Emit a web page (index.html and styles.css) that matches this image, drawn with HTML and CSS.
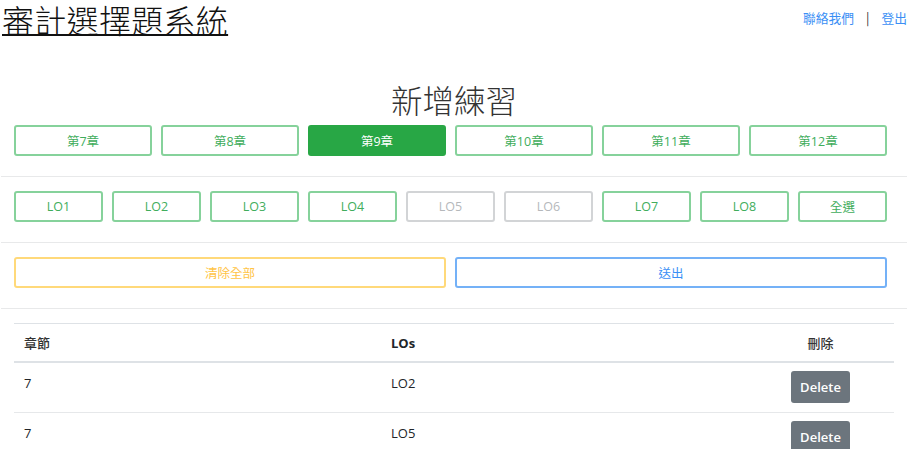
FILE: index.html
```html
<!DOCTYPE html>
<html lang="zh-Hant">
<head>
<meta charset="utf-8">
<title>審計選擇題系統</title>
<link rel="stylesheet" href="styles.css">
</head>
<body>
<div class="page">
  <header class="topbar">
    <h1 class="site-title">審計選擇題系統</h1>
    <nav class="toplinks">
      <a class="toplink" href="#">聯絡我們</a>
      <span class="sep">|</span>
      <a class="toplink" href="#">登出</a>
    </nav>
  </header>

  <h2 class="heading">新增練習</h2>

  <div class="btn-row chapters">
    <button class="btn btn-green">第7章</button>
    <button class="btn btn-green">第8章</button>
    <button class="btn btn-green active">第9章</button>
    <button class="btn btn-green">第10章</button>
    <button class="btn btn-green">第11章</button>
    <button class="btn btn-green">第12章</button>
  </div>

  <hr class="divider">

  <div class="btn-row los">
    <button class="btn btn-green">LO1</button>
    <button class="btn btn-green">LO2</button>
    <button class="btn btn-green">LO3</button>
    <button class="btn btn-green">LO4</button>
    <button class="btn btn-gray">LO5</button>
    <button class="btn btn-gray">LO6</button>
    <button class="btn btn-green">LO7</button>
    <button class="btn btn-green">LO8</button>
    <button class="btn btn-green">全選</button>
  </div>

  <hr class="divider">

  <div class="btn-row actions">
    <button class="btn btn-yellow">清除全部</button>
    <button class="btn btn-blue">送出</button>
  </div>

  <hr class="divider">

  <table class="list">
    <colgroup>
      <col class="c1"><col class="c2"><col class="c3"><col class="c4">
    </colgroup>
    <thead>
      <tr>
        <th class="cjk">章節</th>
        <th class="lat">LOs</th>
        <th class="cjk center">刪除</th>
        <th></th>
      </tr>
    </thead>
    <tbody>
      <tr>
        <td>7</td>
        <td>LO2</td>
        <td class="center del"><button class="btn-del">Delete</button></td>
        <td></td>
      </tr>
      <tr>
        <td>7</td>
        <td>LO5</td>
        <td class="center del"><button class="btn-del">Delete</button></td>
        <td></td>
      </tr>
    </tbody>
  </table>
</div>
</body>
</html>
```

FILE: styles.css
```css
html, body {
  margin: 0;
  padding: 0;
  background: #ffffff;
}

body {
  font-family: "Open Sans", "Noto Sans CJK TC", sans-serif;
  color: #212529;
  overflow: hidden;
}

.page {
  width: 906px;
  margin-left: 1px;
}

.topbar {
  display: flex;
  justify-content: space-between;
  align-items: flex-start;
}

.site-title {
  margin: 0 0 0 1px;
  font-family: "Noto Sans CJK TC", sans-serif;
  font-weight: 300;
  font-size: 32px;
  line-height: 38px;
  color: #111;
  text-decoration: underline;
  text-decoration-thickness: 2px;
  text-underline-offset: 1px;
  letter-spacing: 0.3px;
}

.toplinks {
  display: flex;
  align-items: center;
  margin-top: 10px;
  font-family: "Noto Sans CJK TC", sans-serif;
  font-size: 12.75px;
  line-height: 16px;
}

.toplink {
  color: #3b8ff5;
  text-decoration: none;
}

.sep {
  color: #333;
  margin: 0 12px 0 12px;
}

.heading {
  margin: 41px 0 6px;
  text-align: center;
  font-family: "Noto Sans CJK TC", sans-serif;
  font-weight: 300;
  font-size: 31.5px;
  line-height: 40px;
  color: #333;
}

.btn-row {
  display: flex;
  gap: 9px;
  padding: 0 20px 0 13px;
}

.btn {
  flex: 1 1 0;
  height: 31px;
  box-sizing: border-box;
  border-radius: 3px;
  background: #fff;
  font-family: "Open Sans", "Noto Sans CJK TC", sans-serif;
  font-size: 12.5px;
  padding: 0;
  cursor: pointer;
}

.btn-green {
  border: 2px solid #86d29b;
  color: #41ad5c;
}

.btn-green.active {
  background: #28a745;
  border-color: #28a745;
  color: #fff;
}

.btn-gray {
  border: 2px solid #d2d4d6;
  color: #b5b8bb;
}

.btn-yellow {
  border: 2px solid #ffd97a;
  color: #ffc446;
}

.btn-blue {
  border: 2px solid #74b1f7;
  color: #3a8ff5;
}

.divider {
  border: 0;
  border-top: 1px solid #e8e9ea;
  margin: 20px 0 14px;
  height: 0;
}

.list {
  margin-left: 13px;
  width: 880px;
  table-layout: fixed;
  border-collapse: collapse;
  font-size: 13px;
  color: #212529;
}

.c1 { width: 367px; }
.c2 { width: 400px; }
.c3 { width: 79px; }
.c4 { width: 34px; }

.list th,
.list td {
  padding: 10px 10px;
  text-align: left;
  vertical-align: top;
  line-height: 20px;
}

.list thead th {
  border-top: 1px solid #dee2e6;
  border-bottom: 2px solid #dee2e6;
  padding-top: 9px;
  padding-bottom: 8px;
}

.list th.lat {
  font-weight: 700;
}

.list th.cjk {
  font-family: "Noto Sans CJK TC", sans-serif;
  font-weight: 500;
  color: #333;
}

.list tbody td {
  border-bottom: 1px solid #e6e8ea;
  padding-top: 8px;
  padding-bottom: 9px;
}

.list tbody td:first-child,
.list tbody td:nth-child(2) {
  padding-top: 10px;
}

.list .center {
  text-align: center;
}

.list td.del {
  padding-left: 0;
  padding-right: 0;
}

.btn-del {
  width: 59px;
  height: 32px;
  border: 0;
  border-radius: 3px;
  background: #6c757d;
  color: #fff;
  font-family: "Open Sans", sans-serif;
  font-size: 13px;
  font-weight: 600;
  padding: 0;
}
```
